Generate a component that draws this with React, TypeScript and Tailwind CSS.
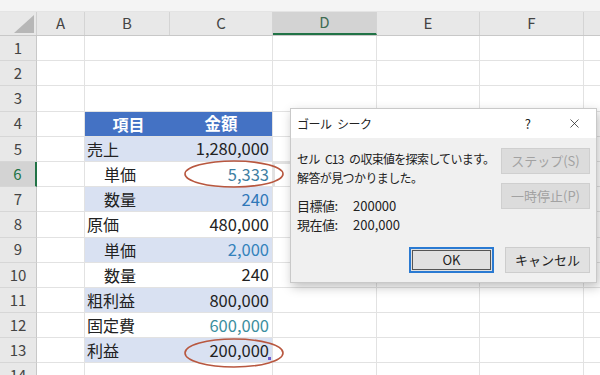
import { X } from "lucide-react";

const cols = [
  { k: "A", w: "w-[48px]" },
  { k: "B", w: "w-[85px]" },
  { k: "C", w: "w-[103px]" },
  { k: "D", w: "w-[104px]" },
  { k: "E", w: "w-[103px]" },
  { k: "F", w: "w-[104px]" },
];

const table: Record<number, { b: string; c: string; cls: string; indent?: boolean; band?: boolean; head?: boolean }> = {
  4: { b: "項目", c: "金額", cls: "text-white", head: true },
  5: { b: "売上", c: "1,280,000", cls: "text-[#222]", band: true },
  6: { b: "単価", c: "5,333", cls: "text-[#3f7fa3]", indent: true },
  7: { b: "数量", c: "240", cls: "text-[#2f77b8]", indent: true, band: true },
  8: { b: "原価", c: "480,000", cls: "text-[#222]" },
  9: { b: "単価", c: "2,000", cls: "text-[#3381bb]", indent: true, band: true },
  10: { b: "数量", c: "240", cls: "text-[#222]", indent: true },
  11: { b: "粗利益", c: "800,000", cls: "text-[#222]", band: true },
  12: { b: "固定費", c: "600,000", cls: "text-[#3b8e9e]" },
  13: { b: "利益", c: "200,000", cls: "text-[#222]", band: true },
};

function Row({ n }: { n: number }) {
  const t = table[n];
  const sel = n === 6;
  const bg = t?.head ? "bg-[#4472c4]" : t?.band ? "bg-[#d9e1f2]" : "bg-white";
  return (
    <div className="flex h-[25.2px]">
      <div
        className={
          "w-[37px] shrink-0 flex items-center justify-center text-[15px] border-b border-[#d6d6d6] " +
          (sel ? "bg-[#d3d3d3] text-[#217346] border-r-2 border-r-[#217346]" : "bg-[#e8e8e8] text-[#444] border-r border-r-[#c8c8c8]")
        }
      >
        {n}
      </div>
      <div className="w-[48px] shrink-0 border-r border-b border-[#e2e2e2]" />
      <div
        className={
          "w-[85px] shrink-0 flex items-center border-b border-[#e2e2e2] text-[16px] " +
          bg +
          (t?.head ? " justify-center font-bold text-white" : " text-[#222]") +
          (t?.indent ? " pl-[19px]" : " pl-[2px]")
        }
      >
        {t?.b}
      </div>
      <div
        className={
          "relative w-[103px] shrink-0 flex items-center border-r border-b border-[#e2e2e2] text-[16.5px] " +
          bg +
          " " +
          (t?.cls ?? "") +
          (t?.head ? " justify-center font-bold" : " justify-end pr-[3px]")
        }
      >
        {t?.c}
        {n === 13 && <span className="absolute right-[1px] bottom-[2px] w-[3px] h-[3px] bg-[#6a5acd]" />}
      </div>
      <div className={"w-[104px] shrink-0 border-b border-[#e2e2e2] " + (sel ? "border-2 border-[#2f5d3f]" : "border-r")} />
      <div className="w-[103px] shrink-0 border-r border-b border-[#e2e2e2]" />
      <div className="w-[104px] shrink-0 border-r border-b border-[#e2e2e2]" />
      <div className="flex-1 border-b border-[#e2e2e2]" />
    </div>
  );
}

function Btn({ label, kind }: { label: string; kind: "off" | "ok" | "norm" }) {
  const cls =
    kind === "off"
      ? "w-[89px] bg-[#dcdcdc] border border-[#cfcfcf] text-[#a2a2a2]"
      : kind === "ok"
      ? "w-[85px] bg-[#e1e1e1] border-2 border-[#2a7ad2] text-[#222] outline outline-1 -outline-offset-4 outline-[#555]"
      : "w-[85px] bg-[#e1e1e1] border border-[#cdcdcd] text-[#222]";
  return (
    <div className={"h-[26px] flex items-center justify-center text-[13px] whitespace-nowrap " + cls}>{label}</div>
  );
}

export default function App() {
  const rows = Array.from({ length: 14 }, (_, i) => i + 1);
  return (
    <div className="relative w-[600px] h-[375px] overflow-hidden bg-white font-['Noto_Sans_CJK_JP',sans-serif]">
      <div className="h-[12px] bg-[#f4f4f4] border-b border-[#e4e4e4]" />
      <div className="flex h-[24px] bg-[#e8e8e8] border-b border-[#c8c8c8] text-[15px] text-[#444]">
        <div className="w-[37px] shrink-0 flex items-end justify-end p-[2px] border-r border-[#d0d0d0]">
          <svg width="26" height="18" viewBox="0 0 26 18">
            <polygon points="26,0 26,18 6,18" fill="#b7b7b7" />
          </svg>
        </div>
        {cols.map((c) => (
          <div
            key={c.k}
            className={
              c.w +
              " shrink-0 flex items-center justify-center border-r border-[#d4d4d4] " +
              (c.k === "D" ? "bg-[#d3d3d3] text-[#3f6b52] border-b-2 border-b-[#217346]" : "")
            }
          >
            {c.k}
          </div>
        ))}
        <div className="flex-1" />
      </div>
      {rows.map((n) => (
        <Row key={n} n={n} />
      ))}

      <svg className="absolute inset-0 pointer-events-none" width="600" height="375">
        <ellipse cx="234" cy="174" rx="49" ry="13" fill="none" stroke="#b8573f" strokeWidth="1.6" />
        <ellipse cx="234" cy="353" rx="49" ry="14" fill="none" stroke="#b8573f" strokeWidth="1.6" />
      </svg>

      <div className="absolute left-[290px] top-[108px] w-[307px] h-[175px] flex flex-col bg-[#f0f0f0] border border-[#c9c9c9] shadow-[2px_4px_10px_rgba(0,0,0,0.25)]">
        <div className="h-[29px] shrink-0 bg-white flex items-center pl-[6px] pr-[14px] text-[12px] text-[#222]">
          <span className="flex-1 tracking-[-0.5px]">{"ゴール\u2002シーク"}</span>
          <span className="mr-[36px] text-[13px]">?</span>
          <X size={15} strokeWidth={1.2} color="#222" />
        </div>
        <div className="flex-1 flex flex-col pl-[6px] pr-[5px] pt-[10px] pb-[9px] text-[#222]">
          <div className="flex">
            <div className="flex-1 flex flex-col">
              <div className="h-[19px] mt-[1px] flex items-center whitespace-nowrap text-[12px] tracking-[-0.7px]">{"セル\u2002C13\u2002の収束値を探索しています。"}</div>
              <div className="h-[19px] flex items-center whitespace-nowrap text-[12px] tracking-[-0.6px]">解答が見つかりました。</div>
              <div className="h-[19px] mt-[9px] flex items-center text-[13px]">
                <span className="w-[56px] tracking-[-0.5px]">目標値:</span>
                <span>200000</span>
              </div>
              <div className="h-[19px] flex items-center text-[13px]">
                <span className="w-[56px] tracking-[-0.5px]">現在値:</span>
                <span>200,000</span>
              </div>
            </div>
            <div className="flex flex-col gap-[9px] w-[90px]">
              <Btn label="ステップ(S)" kind="off" />
              <Btn label="一時停止(P)" kind="off" />
            </div>
          </div>
          <div className="flex-1" />
          <div className="flex justify-end gap-[11px] pr-[1px]">
            <Btn label="OK" kind="ok" />
            <Btn label="キャンセル" kind="norm" />
          </div>
        </div>
      </div>
    </div>
  );
}
